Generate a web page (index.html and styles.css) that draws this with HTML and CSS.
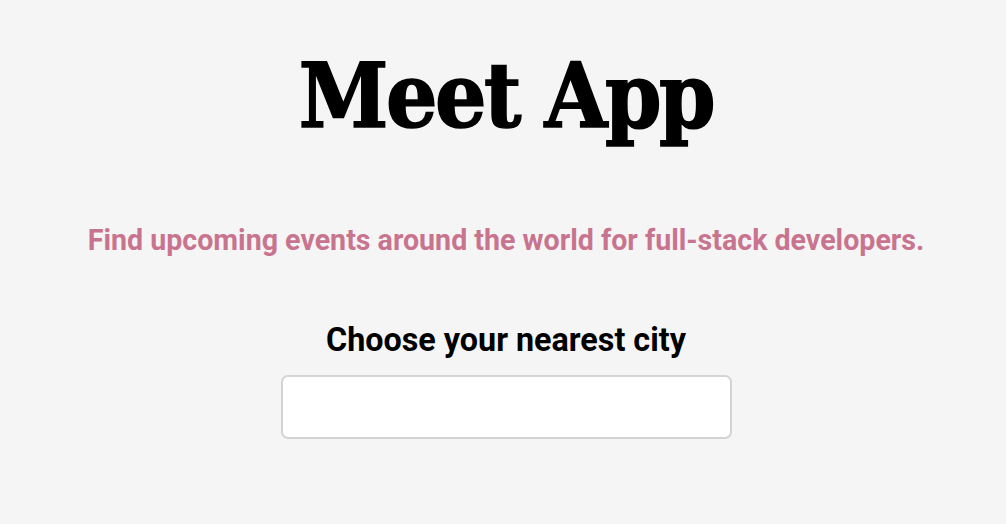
FILE: index.html
```html
<!DOCTYPE html>
<html lang="en">
<head>
<meta charset="utf-8">
<title>Meet App</title>
<link rel="stylesheet" href="styles.css">
</head>
<body>
<div class="app">
  <h1 class="title">Meet App</h1>
  <p class="tagline">Find upcoming events around the world for full-stack developers.</p>
  <div class="city-search">
    <h3 class="city-label">Choose your nearest city</h3>
    <input class="city-input" type="text" aria-label="City">
  </div>
</div>
</body>
</html>
```
FILE: styles.css
```css
html, body {
  margin: 0;
  padding: 0;
  background: #f5f5f5;
}
.app {
  display: flex;
  flex-direction: column;
  align-items: center;
  text-align: center;
  font-family: Roboto, "Liberation Sans", sans-serif;
  padding: 40px 0 0 6px;
}
.title {
  margin: 0;
  font-family: "DejaVu Serif", "Liberation Serif", serif;
  font-stretch: condensed;
  font-weight: 700;
  font-size: 90px;
  line-height: 110px;
  letter-spacing: -2.5px;
  color: #000;
  -webkit-text-stroke: 1.5px #000;
}
.tagline {
  margin: 70px 0 0;
  font-size: 28.6px;
  font-weight: 700;
  line-height: 40px;
  color: #c9748f;
}
.city-search {
  display: flex;
  flex-direction: column;
  align-items: center;
  margin-top: 60px;
}
.city-label {
  margin: 0;
  font-size: 32.3px;
  font-weight: 700;
  line-height: 40px;
  color: #000;
}
.city-input {
  margin-top: 15px;
  box-sizing: border-box;
  width: 451px;
  height: 64px;
  background: #fff;
  border: 2px solid #d4d4d4;
  border-radius: 7px;
  outline: none;
  font-size: 20px;
  padding: 0 12px;
}
```
